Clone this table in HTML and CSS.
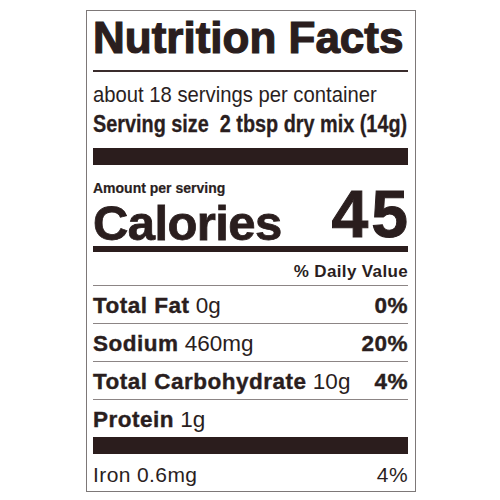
FILE: index.html
```html
<!DOCTYPE html>
<html>
<head>
  <title>Nutrition Facts</title>
  <meta charset="utf-8">
  <link rel="stylesheet" href="styles.css">
</head>
<body>

  <div class="label">

    <div class="title">Nutrition Facts</div>
    <div class="rule"></div>

    <div class="servings"><span>about 18 servings per container</span></div>
    <div class="serving_size"><span>Serving size&nbsp;&nbsp;2 tbsp dry mix (14g)</span></div>

    <div class="bar thick"></div>

    <div class="calories_row">
      <div>
        <div class="amount">Amount per serving</div>
        <div class="calories">Calories</div>
      </div>
      <div class="calories_value">45</div>
    </div>

    <div class="bar medium"></div>

    <div class="dv_head">% Daily Value</div>

    <div class="nutrient">
      <span><b>Total Fat</b> 0g</span>
      <b>0%</b>
    </div>
    <div class="nutrient">
      <span><b>Sodium</b> 460mg</span>
      <b>20%</b>
    </div>
    <div class="nutrient">
      <span><b>Total Carbohydrate</b> 10g</span>
      <b>4%</b>
    </div>
    <div class="nutrient last">
      <span><b>Protein</b> 1g</span>
    </div>

    <div class="bar thick"></div>

    <div class="vitamin">
      <span>Iron 0.6mg</span>
      <span>4%</span>
    </div>

  </div>

</body>
</html>
```

FILE: styles.css
```css
body {
  margin: 0;
  background-color: #ffffff;
  color: #2a1e1e;
  font-family: "Liberation Sans", Arial, sans-serif;
}

.label {
  width: 315px;
  margin: 10px 0 0 86px;
  padding: 0 7px 0 6px;
  border: 1px solid #7d7878;
}

.title {
  font-size: 44px;
  line-height: 54px;
  font-weight: bold;
  white-space: nowrap;
  -webkit-text-stroke: 1.2px #2a1e1e;
}

.rule {
  margin-top: 5px;
  height: 2px;
  background-color: #3a2c2c;
}

/* no narrow face installed, so the condensed lines are squeezed */
.servings {
  margin-top: 8px;
  font-size: 22.5px;
  line-height: 30px;
  white-space: nowrap;
}

.servings span {
  display: inline-block;
  transform: scaleX(0.9);
  transform-origin: left center;
}

.serving_size {
  font-weight: bold;
  font-size: 24.2px;
  line-height: 28px;
  white-space: nowrap;
}

.serving_size span {
  display: inline-block;
  transform: scaleX(0.82);
  transform-origin: left center;
  -webkit-text-stroke: 0.3px #2a1e1e;
}

.bar {
  background-color: #2b1d1d;
}

.bar.thick {
  height: 17px;
}

.bar.medium {
  height: 6px;
}

.serving_size + .bar {
  margin-top: 10px;
}

.calories_row {
  display: flex;
  justify-content: space-between;
  align-items: flex-end;
}

.amount {
  margin-top: 14px;
  font-size: 14px;
  line-height: 18px;
  font-weight: bold;
  white-space: nowrap;
  -webkit-text-stroke: 0.2px #2a1e1e;
}

.calories {
  margin-top: 3px;
  font-size: 49px;
  line-height: 46px;
  font-weight: bold;
  letter-spacing: -0.6px;
  -webkit-text-stroke: 0.8px #2a1e1e;
}

.calories_value {
  font-size: 66px;
  line-height: 64px;
  font-weight: bold;
  letter-spacing: 3px;
  margin-right: -3px;
  -webkit-text-stroke: 1px #2a1e1e;
}

.dv_head {
  padding-top: 6px;
  font-size: 17px;
  line-height: 27px;
  font-weight: bold;
  letter-spacing: 0.35px;
  text-align: right;
  border-bottom: 1px solid #8c8585;
}

.nutrient {
  display: flex;
  justify-content: space-between;
  padding-top: 3px;
  font-size: 22.5px;
  line-height: 34px;
  white-space: nowrap;
  border-bottom: 1px solid #8c8585;
}

.nutrient b {
  letter-spacing: 0.5px;
  -webkit-text-stroke: 0.4px #2a1e1e;
}

.nutrient.last {
  border-bottom: none;
}

.vitamin {
  display: flex;
  justify-content: space-between;
  padding-top: 5px;
  font-size: 21px;
  line-height: 32px;
  letter-spacing: 0.4px;
}
```
